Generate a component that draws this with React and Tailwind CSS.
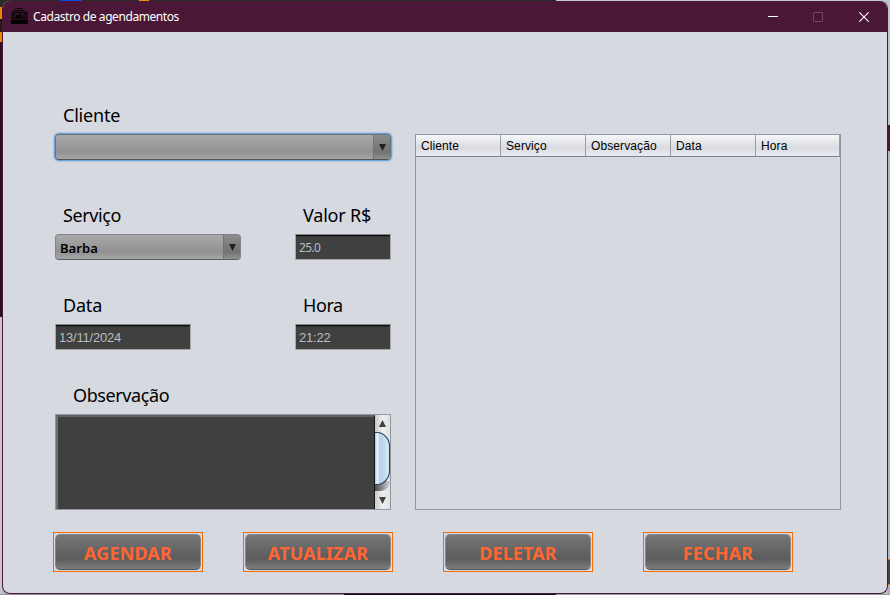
import React from "react";

const label = "block h-6 whitespace-nowrap text-[18px] leading-6 text-black";
const field =
  "flex h-[26px] items-center border border-[#a8a8a8] border-t-[#85878c] bg-[#404040] pl-[3px] pt-[2px] text-[#b9bcc0] shadow-[inset_0_1px_0_#0c0c0c,inset_0_2px_0_#303030]";

function Combo({ value, focused, className }) {
  return (
    <div
      className={`flex h-[26px] overflow-hidden rounded-[4px] border bg-linear-to-b from-[#a9a9a9] via-[#919191] via-70% to-[#a6a6a6] ${
        focused
          ? "border-[#68727e] border-b-[#4c535b] shadow-[0_0_0_1px_#6fa3d6,0_0_1px_2px_#a9c6e6]"
          : "border-[#7d838b] border-b-[#566069]"
      } ${className}`}
    >
      <span className="flex-1 pl-[4px] pt-px text-[13px] font-semibold leading-[24px] tracking-[0.05px] text-black">{value}</span>
      <span className="flex w-[17px] items-center justify-center border-l border-[#6b7683] bg-linear-to-b from-[#8c8c8c] via-[#737373] via-70% to-[#909090]">
        <svg width="7" height="7" viewBox="0 0 7 7">
          <path d="M0 0H7L3.5 7Z" fill="#202020" />
        </svg>
      </span>
    </div>
  );
}

function ActionButton({ children }) {
  return (
    <button className="h-10 w-[150px] border border-[#ff6a00] bg-[#d6d9e0] p-px">
      <span className="flex h-full w-full items-center justify-center rounded-[5px] border border-[#85898f] border-b-[#505458] bg-linear-to-b from-[#777777] via-[#5c5c5c] via-70% to-[#7d7d7d] pt-[2px] text-[18px] font-bold leading-none tracking-[0.12px] text-[#ff6633]">
        {children}
      </span>
    </button>
  );
}

function TitleBar() {
  return (
    <header className="flex h-[31px] shrink-0 items-center bg-[#4a1836] text-white">
      <svg className="ml-[8px]" width="17" height="17" viewBox="0 0 17 17">
        <path d="M4 .5H12M3 2.5H13" stroke="#09030a" fill="none" />
        <path d="M1 4H16V11H1Z" fill="#1d0916" stroke="#09030a" />
        <path d="M4 6H8M4 8H6M10 6H13" stroke="#4a1836" />
        <path d="M5 7H10V10H5Z" fill="#050205" />
        <path d="M0 12H17V16H0Z" fill="#020102" />
      </svg>
      <span className="ml-[5px] flex-1 whitespace-nowrap pt-px text-[12px] tracking-[-0.42px]">Cadastro de agendamentos</span>
      <svg className="mr-[35px]" width="10" height="11" viewBox="0 0 10 11">
        <path d="M0 5.5H10" stroke="#fff" />
      </svg>
      <svg className="mr-[36px]" width="10" height="10" viewBox="0 0 10 10">
        <rect x=".5" y=".5" width="9" height="9" rx=".7" fill="none" stroke="#754961" />
      </svg>
      <svg className="mr-[18px]" width="10" height="10" viewBox="0 0 10 10">
        <path d="M.3.3L9.7 9.7M9.7.3L.3 9.7" stroke="#fff" strokeWidth="1.1" />
      </svg>
    </header>
  );
}

function ScrollBar() {
  return (
    <div className="w-[15px] bg-linear-to-r from-[#c9cbce] via-[#eceeef] to-[#dfe2e4]">
      <svg width="15" height="94" viewBox="0 0 15 94">
        <defs>
          <linearGradient id="thumb">
            <stop offset="0" stopColor="#a9c3da" />
            <stop offset=".16" stopColor="#eff6fb" />
            <stop offset=".32" stopColor="#b8d2e8" />
            <stop offset=".7" stopColor="#c3dcf0" />
            <stop offset="1" stopColor="#edf8ff" />
          </linearGradient>
          <linearGradient id="shade">
            <stop offset="0" stopColor="#4d4c50" />
            <stop offset="1" stopColor="#d2d2d5" />
          </linearGradient>
        </defs>
        <path d="M4 12L7.5 5L11 12Z" fill="#404040" />
        <path d="M0 66H15C15 71 11 76 5 76H0Z" fill="url(#shade)" />
        <path d="M0 17.5H2C9 17.5 14.5 24 14.5 31V56C14.5 63 9 69.500 2 69.500H0Z" fill="url(#thumb)" />
        <path d="M0 17.5H2C9 17.5 14.5 24 14.5 31V56C14.5 63 9 69.500 2 69.500H0" fill="none" stroke="#29475c" strokeWidth="1.2" />
        <path d="M4 82H11L7.5 89Z" fill="#404040" />
      </svg>
    </div>
  );
}

function Table() {
  return (
    <div className="mt-[102px] h-[376px] w-[426px] border border-[#9297a1]">
      <div className="grid h-[22px] grid-cols-[85px_85px_85px_85px_84px] border-b border-[#7e838f] bg-linear-to-b from-[#f6f7f8] via-[#d9dbdf] via-60% to-[#e9ebf1] font-['Liberation_Sans',Arial,sans-serif] text-[12px] leading-[23px] tracking-[0.1px] text-black">
        {["Cliente", "Serviço", "Observação", "Data", "Hora"].map((name) => (
          <span key={name} className="h-[21px] border-r border-[#989ca5] pl-[5px]">
            {name}
          </span>
        ))}
      </div>
    </div>
  );
}

export default function App() {
  return (
    <div className="flex h-[595px] w-[890px] flex-col overflow-hidden bg-[#adb0b7] font-['Noto_Sans','Open_Sans',sans-serif]">
      <div className="flex h-px shrink-0">
        <i className="w-[60px] bg-[#2b2b2b]" />
        <i className="w-[22px] bg-[#0b48e8]" />
        <i className="w-[57px] bg-[#2b2b2b]" />
        <i className="w-[10px] bg-[#f28c13]" />
        <i className="w-[407px] bg-[#2b2b2b]" />
        <i className="flex-1 bg-[#c2c9ce]" />
      </div>
      <div className="flex h-[593px] shrink-0">
        <div className="flex w-[2px] flex-col">
          <i className="h-[6px] bg-[#2b2b2b]" />
          <i className="h-[12px] bg-[#f28500]" />
          <i className="h-[13px] bg-[#211a17]" />
          <i className="h-[10px] bg-[#f28500]" />
          <i className="h-[275px] bg-[#2c0e20]" />
          <i className="flex-1 bg-[#c8c9ce]" />
        </div>
        <div className="w-[886px] bg-linear-to-br from-[#2b2b2b] to-[#b8bac1] to-10%">
          <main className="flex h-full flex-col overflow-hidden rounded-[8px] border border-t-0 border-[#4a1836] bg-[#d6d9e0]">
            <TitleBar />
            <div className="flex pl-[52px]">
              <form className="w-[360px] pt-[71px]">
                <label className={`${label} pl-2 tracking-[-0.2px]`}>Cliente</label>
                <Combo focused value="" className="mt-[7px] w-[336px]" />
                <div className="mt-[43px] flex gap-[54px]">
                  <div className="w-[186px]">
                    <label className={`${label} pl-2 tracking-[-0.4px]`}>Serviço</label>
                    <Combo value="Barba" className="mt-[7px]" />
                  </div>
                  <div className="w-[96px]">
                    <label className={`${label} pl-2 tracking-[-0.2px]`}>Valor R$</label>
                    <div className={`${field} mt-[7px] text-[12px] tracking-[-0.65px]`}>25.0</div>
                  </div>
                </div>
                <div className="mt-[33px] flex gap-[104px]">
                  <div className="w-[136px]">
                    <label className={`${label} pl-2 tracking-[-0.2px]`}>Data</label>
                    <div className={`${field} mt-[7px] font-['Liberation_Sans',Arial,sans-serif] text-[13px] tracking-[-0.2px]`}>13/11/2024</div>
                  </div>
                  <div className="w-[96px]">
                    <label className={`${label} pl-2 tracking-[-0.4px]`}>Hora</label>
                    <div className={`${field} mt-[7px] font-['Liberation_Sans',Arial,sans-serif] text-[13px] tracking-[-0.2px]`}>21:22</div>
                  </div>
                </div>
                <label className={`${label} mt-[33px] pl-[18px] tracking-[-0.4px]`}>Observação</label>
                <div className="mt-[7px] flex h-[96px] w-[336px] border border-[#9297a1]">
                  <div className="flex-1 border-l-2 border-r border-t-2 border-l-[#6b6d70] border-r-[#151515] border-t-[#606265] bg-[#404040]" />
                  <ScrollBar />
                </div>
              </form>
              <Table />
            </div>
            <div className="mt-[22px] flex pl-[50px]">
              <div className="flex gap-[40px]">
                <ActionButton>AGENDAR</ActionButton>
                <ActionButton>ATUALIZAR</ActionButton>
              </div>
              <div className="ml-[50px] flex gap-[50px]">
                <ActionButton>DELETAR</ActionButton>
                <ActionButton>FECHAR</ActionButton>
              </div>
            </div>
          </main>
        </div>
        <div className="flex w-[2px] flex-col">
          <i className="h-[124px] bg-[#c2c4cb]" />
          <i className="h-[26px] bg-[#4a1836]" />
          <i className="h-[408px] bg-[#b4b6bd]" />
          <i className="h-px bg-[#ff6a00]" />
          <i className="h-[24px] bg-[#454549]" />
          <i className="h-px bg-[#ff6a00]" />
        </div>
      </div>
      <div className="flex h-px shrink-0">
        <i className="w-[344px] bg-[#96969a]" />
        <i className="w-[212px] bg-[#17131a]" />
        <i className="flex-1 bg-[#9a9ba1]" />
      </div>
    </div>
  );
}
